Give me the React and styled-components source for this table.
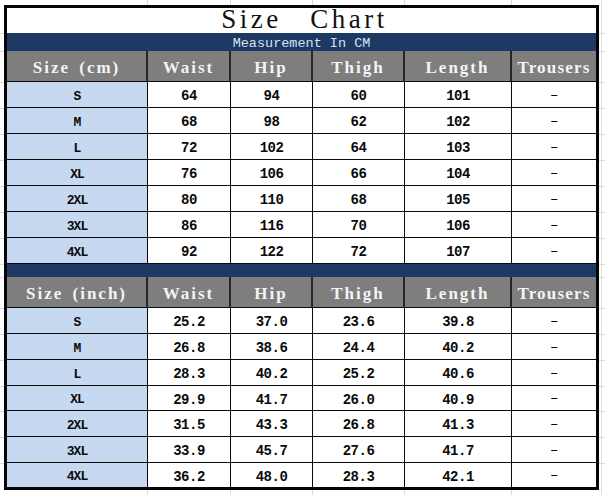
import React from "react";
import styled, { createGlobalStyle } from "styled-components";

const COLS = "141px 83px 82px 92px 107px 84px";

const vLines = [147, 230, 312, 404, 511, 601];
const hLines = [33, 51, 82, 108, 134, 160, 186, 212, 238, 264, 277, 308, 334, 360, 386, 411, 437, 463];
const gridBg = [
  ...vLines.map((x) => `linear-gradient(#dcdcdc, #dcdcdc) ${x}px 0 / 1px 100% no-repeat`),
  ...hLines.map((y) => `linear-gradient(#dcdcdc, #dcdcdc) 0 ${y}px / 100% 1px no-repeat`),
].join(", ");

const Global = createGlobalStyle`
  html, body { margin: 0; padding: 0; background: #fff; }
  body { width: 605px; height: 495px; overflow: hidden; }
`;

const Page = styled.div`
  width: 605px;
  height: 495px;
  box-sizing: border-box;
  padding: 5px 0 0 4px;
  background: ${gridBg};
  background-color: #fff;
`;

const Chart = styled.div`
  width: 595px;
  box-sizing: border-box;
  border: 3px solid #050505;
  display: flex;
  flex-direction: column;
  background: #fff;
`;

const Title = styled.div`
  height: 25px;
  display: flex;
  align-items: center;
  justify-content: center;
  font-family: "Liberation Serif", serif;
  font-size: 27px;
  letter-spacing: 3.5px;
  word-spacing: 4px;
  color: #111;
  white-space: pre;
  padding-left: 6px;
  padding-bottom: 2px;
  box-sizing: border-box;
`;

const Band = styled.div`
  height: ${(p) => p.h}px;
  background: #1d3863;
  display: flex;
  align-items: center;
  justify-content: center;
  font-family: "Liberation Mono", monospace;
  font-size: 13.5px;
  color: #d6e2f2;
  padding-top: 2px;
  box-sizing: border-box;
`;

const Row = styled.div`
  display: grid;
  grid-template-columns: ${COLS};
  height: ${(p) => p.h}px;
  box-sizing: border-box;
  border-bottom: ${(p) => (p.last ? "none" : "1px solid #0a0a0a")};
`;

const HeadCell = styled.div`
  background: #7e7e7e;
  color: #f4f4f4;
  font-family: "Liberation Serif", serif;
  font-weight: bold;
  font-size: 17px;
  letter-spacing: 2px;
  word-spacing: 3px;
  display: flex;
  align-items: center;
  justify-content: center;
  padding-top: 4px;
  box-sizing: border-box;
  border-right: 2px solid #262626;
  white-space: pre;
  &:last-child { border-right: none; letter-spacing: 1.2px; }
`;

const Cell = styled.div`
  background: ${(p) => (p.size ? "#c6d9f0" : "#fff")};
  color: #0a0a0a;
  font-family: "Liberation Mono", monospace;
  font-weight: ${(p) => (p.dash ? "normal" : "bold")};
  font-size: ${(p) => (p.size ? "13px" : "14px")};
  letter-spacing: ${(p) => (p.size ? "-1px" : "-0.5px")};
  display: flex;
  align-items: center;
  justify-content: center;
  padding-top: ${(p) => (p.dash ? "0" : "3px")};
  box-sizing: border-box;
  border-right: 1px solid #0a0a0a;
  &:last-child { border-right: none; }
`;

const headers = (first) => [first, "Waist", "Hip", "Thigh", "Length", "Trousers"];

const cm = [
  ["S", "64", "94", "60", "101"],
  ["M", "68", "98", "62", "102"],
  ["L", "72", "102", "64", "103"],
  ["XL", "76", "106", "66", "104"],
  ["2XL", "80", "110", "68", "105"],
  ["3XL", "86", "116", "70", "106"],
  ["4XL", "92", "122", "72", "107"],
];

const inch = [
  ["S", "25.2", "37.0", "23.6", "39.8"],
  ["M", "26.8", "38.6", "24.4", "40.2"],
  ["L", "28.3", "40.2", "25.2", "40.6"],
  ["XL", "29.9", "41.7", "26.0", "40.9"],
  ["2XL", "31.5", "43.3", "26.8", "41.3"],
  ["3XL", "33.9", "45.7", "27.6", "41.7"],
  ["4XL", "36.2", "48.0", "28.3", "42.1"],
];

function Section({ first, rows, heights, lastSection }) {
  return (
    <>
      <Row h={31}>
        {headers(first).map((h) => (
          <HeadCell key={h}>{h}</HeadCell>
        ))}
      </Row>
      {rows.map((r, i) => (
        <Row key={r[0]} h={heights[i]} last={lastSection && i === rows.length - 1}>
          <Cell size>{r[0]}</Cell>
          {r.slice(1).map((v, j) => (
            <Cell key={j}>{v}</Cell>
          ))}
          <Cell dash>–</Cell>
        </Row>
      ))}
    </>
  );
}

export default function App() {
  return (
    <>
      <Global />
      <Page>
        <Chart>
          <Title>Size  Chart</Title>
          <Band h={18}>Measurement In CM</Band>
          <Section first="Size (cm)" rows={cm} heights={[26, 26, 26, 26, 26, 26, 26]} />
          <Band h={13} />
          <Section
            first="Size (inch)"
            rows={inch}
            heights={[26, 26, 26, 25, 26, 26, 24]}
            lastSection
          />
        </Chart>
      </Page>
    </>
  );
}
